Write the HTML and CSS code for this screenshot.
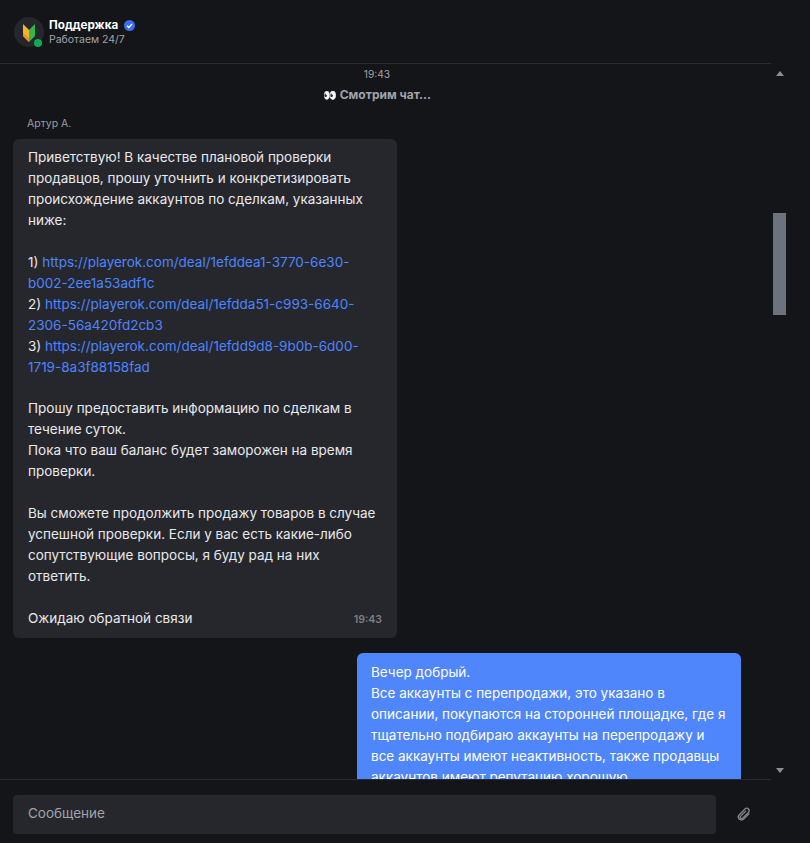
FILE: index.html
```html
<!DOCTYPE html>
<html lang="ru">
<head>
<meta charset="utf-8">
<title>Поддержка</title>
<link rel="stylesheet" href="styles.css">
</head>
<body>
<div class="app">
  <header class="header">
    <div class="avatar">
      <svg class="logo" width="12" height="18" viewBox="0 0 12 18"><path d="M0 0l6 6v12l-6-6z" fill="#f5b52e"/><path d="M0 9l6 5v4l-6-6z" fill="#ee8f2a"/><path d="M12 0l-6 6v12l6-6z" fill="#35b54a"/></svg>
      <span class="online"></span>
    </div>
    <div class="who">
      <div class="name">Поддержка
        <svg class="verified" width="11" height="11" viewBox="0 0 11 11"><circle cx="5.5" cy="5.5" r="5.5" fill="#3a6ef0"/><path d="M3 5.7l1.8 1.7L8 4" fill="none" stroke="#fff" stroke-width="1.4"/></svg>
      </div>
      <div class="status">Работаем 24/7</div>
    </div>
  </header>
  <div class="body">
    <main class="messages">
      <div class="time">19:43</div>
      <div class="typing"><span class="eyes">👀</span> Смотрим чат...</div>
      <div class="author">Артур А.</div>
      <div class="bubble in">Приветствую! В качестве плановой проверки<br>продавцов, прошу уточнить и конкретизировать<br>происхождение аккаунтов по сделкам, указанных<br>ниже:<br><br>1) <a href="#">https://playerok.com/deal/1efddea1-3770-6e30-<br>b002-2ee1a53adf1c</a><br>2) <a href="#">https://playerok.com/deal/1efdda51-c993-6640-<br>2306-56a420fd2cb3</a><br>3) <a href="#">https://playerok.com/deal/1efdd9d8-9b0b-6d00-<br>1719-8a3f88158fad</a><br><br>Прошу предоставить информацию по сделкам в<br>течение суток.<br>Пока что ваш баланс будет заморожен на время<br>проверки.<br><br>Вы сможете продолжить продажу товаров в случае<br>успешной проверки. Если у вас есть какие-либо<br>сопутствующие вопросы, я буду рад на них<br>ответить.<br><br>Ожидаю обратной связи<span class="stamp">19:43</span></div>
      <div class="bubble out">Вечер добрый.<br>Все аккаунты с перепродажи, это указано в<br>описании, покупаются на сторонней площадке, где я<br>тщательно подбираю аккаунты на перепродажу и<br>все аккаунты имеют неактивность, также продавцы<br>аккаунтов имеют репутацию хорошую.</div>
    </main>
    <div class="scrollbar">
      <span class="arrow up"></span>
      <span class="thumb"></span>
      <span class="arrow down"></span>
    </div>
  </div>
  <footer class="composer">
    <div class="field">Сообщение</div>
    <svg class="clip" width="16" height="16" viewBox="0 0 24 24" fill="none" stroke="#85878d" stroke-width="2" stroke-linecap="round" stroke-linejoin="round"><path d="M5 19.5a4.6 4.6 0 0 1 0-6.5L13.5 4.5a3.6 3.6 0 0 1 5.1 5.1l-8.6 8.6a2.1 2.1 0 0 1-3-3l7.5-7.5"/><path d="M19.5 11.5l-7 7a5 5 0 0 1-7.5 1"/></svg>
  </footer>
</div>
</body>
</html>
```
FILE: styles.css
```css
* { box-sizing: border-box; }
html, body { margin: 0; height: 100%; }
body { background: #131518; color: #e8e9ec; font-family: Inter, "Noto Sans", sans-serif; overflow: hidden; }
.app { width: 810px; height: 843px; display: flex; flex-direction: column; }
.header { height: 63px; flex: none; display: flex; align-items: center; gap: 5px; padding: 0 0 0 14px; }
.avatar { position: relative; width: 30px; height: 30px; border-radius: 50%; background: #25272c; display: flex; align-items: center; justify-content: center; }
.logo { width: 12px; height: 18px; margin-top: 2px; }
.online { position: absolute; right: 2px; bottom: 0; width: 8px; height: 8px; border-radius: 50%; background: #12a955; }
.who { display: flex; flex-direction: column; padding-top: 1px; }
.name { font-size: 11.7px; font-weight: 700; line-height: 15px; color: #fff; display: flex; align-items: center; gap: 6px; }
.status { font-size: 10.5px; line-height: 13px; color: #a0a3aa; }
.body { flex: 1; min-height: 0; display: flex; }
.messages { width: 771px; flex: none; overflow: hidden; border-top: 1px solid #2a2c31; border-bottom: 1px solid #2a2c31; display: flex; flex-direction: column; align-items: flex-start; padding: 3px 30px 0 13px; }
.time { align-self: center; font-size: 10.2px; line-height: 14px; color: #a0a3aa; }
.typing { align-self: center; font-size: 12px; font-weight: 700; line-height: 16px; color: #a0a3aa; margin: 6px 0 0; }
.eyes { font-family: "DejaVu Sans", sans-serif; font-size: 11px; font-weight: 400; }
.author { font-size: 10.5px; line-height: 13px; color: #9a9da4; margin: 13px 0 9px 14px; }
.bubble { flex: none; width: 384px; font-size: 13.5px; line-height: 20.95px; border-radius: 6px; padding: 8px 15px 9px; }
.in { background: #26272d; position: relative; height: 499px; }
.in a { color: #4d85ff; text-decoration: none; }
.stamp { position: absolute; right: 15px; bottom: 11px; font-size: 10.5px; line-height: 14px; font-weight: 600; color: #7b7e85; }
.out { background: #4f86fb; color: #fff; align-self: flex-end; margin-top: 15px; padding: 9px 14px 9px; }
.scrollbar { width: 17px; flex: none; display: flex; flex-direction: column; align-items: center; padding: 8px 0 7px; position: relative; }
.arrow { width: 0; height: 0; border-left: 4px solid transparent; border-right: 4px solid transparent; }
.up { border-bottom: 5px solid #8b8e95; }
.down { border-top: 5px solid #8b8e95; margin-top: auto; }
.thumb { width: 13px; height: 102px; background: #6c737c; margin: 137px 0 0; }
.composer { height: 63px; flex: none; display: flex; align-items: flex-start; gap: 20px; padding: 15px 0 0 13px; }
.field { width: 703px; height: 39px; border-radius: 4px; background: #26272d; color: #a0a3aa; font-size: 13.5px; line-height: 37px; padding: 0 15px; }
.clip { margin-top: 11px; }
```
